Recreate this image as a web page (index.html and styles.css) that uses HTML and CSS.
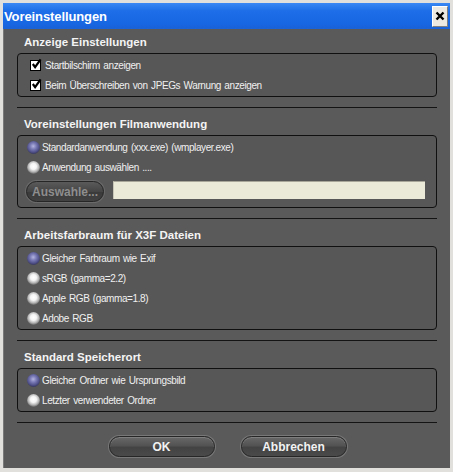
FILE: index.html
```html
<!DOCTYPE html>
<html lang="de">
<head>
    <meta charset="UTF-8">
    <title>Voreinstellungen</title>
    <link rel="stylesheet" href="styles.css">
</head>
<body>

<div class="window">
    <div class="titlebar">
        <span class="title">Voreinstellungen</span>
        <button class="close-btn" type="button">
            <svg width="10" height="10" viewBox="0 0 10 10"><path d="M1.5 1.5 L8.5 8.5 M8.5 1.5 L1.5 8.5" stroke="#000" stroke-width="2.4"/></svg>
        </button>
    </div>

    <div class="dialog">
        <div class="section first">
            <h2 class="section-title">Anzeige Einstellungen</h2>
            <div class="group">
                <label class="option check-row">
                    <span class="checkbox"><svg width="12" height="12" viewBox="0 0 12 12"><path d="M2 6 L4.5 9.5 L10.5 1" fill="none" stroke="#000" stroke-width="2.4"/></svg></span>
                    Startbilschirm anzeigen
                </label>
                <label class="option check-row">
                    <span class="checkbox"><svg width="12" height="12" viewBox="0 0 12 12"><path d="M2 6 L4.5 9.5 L10.5 1" fill="none" stroke="#000" stroke-width="2.4"/></svg></span>
                    Beim Überschreiben von JPEGs Warnung anzeigen
                </label>
            </div>
        </div>

        <div class="section">
            <h2 class="section-title">Voreinstellungen Filmanwendung</h2>
            <div class="group film-group">
                <label class="option"><span class="radio selected"></span>Standardanwendung (xxx.exe) (wmplayer.exe)</label>
                <label class="option"><span class="radio"></span>Anwendung auswählen ....</label>
                <div class="browse-row">
                    <button class="pill-btn browse-btn" type="button" disabled>Auswahle...</button>
                    <input class="path-input" type="text">
                </div>
            </div>
        </div>

        <div class="section">
            <h2 class="section-title">Arbeitsfarbraum für X3F Dateien</h2>
            <div class="group">
                <label class="option"><span class="radio selected"></span>Gleicher Farbraum wie Exif</label>
                <label class="option"><span class="radio"></span>sRGB (gamma=2.2)</label>
                <label class="option"><span class="radio"></span>Apple RGB (gamma=1.8)</label>
                <label class="option"><span class="radio"></span>Adobe RGB</label>
            </div>
        </div>

        <div class="section">
            <h2 class="section-title">Standard Speicherort</h2>
            <div class="group">
                <label class="option"><span class="radio selected"></span>Gleicher Ordner wie Ursprungsbild</label>
                <label class="option"><span class="radio"></span>Letzter verwendeter Ordner</label>
            </div>
        </div>

        <div class="actions">
            <button class="pill-btn action-btn" type="button">OK</button>
            <button class="pill-btn action-btn" type="button">Abbrechen</button>
        </div>
    </div>
</div>

</body>
</html>
```

FILE: styles.css
```css
* {
    box-sizing: border-box;
}

body {
    margin: 0;
    background-color: #d6d3ce;
    font-family: "Liberation Sans", Arial, sans-serif;
}

.window {
    width: 453px;
    height: 472px;
    display: flex;
    flex-direction: column;
    border-style: solid;
    border-color: #e2e0dc;
    border-width: 3px 3px 4px 3px;
    background-color: #5a5a5a;
}

.titlebar {
    height: 26px;
    display: flex;
    align-items: center;
    justify-content: space-between;
    padding: 0 2px 0 1px;
    background: linear-gradient(#3a88f4, #1d6ee8 30%, #1766e2 80%, #1a62d6);
}

.title {
    color: #fff;
    font-weight: bold;
    font-size: 13px;
    letter-spacing: -0.1px;
}

.close-btn {
    width: 16px;
    height: 21px;
    padding: 0;
    display: flex;
    align-items: center;
    justify-content: center;
    border: 1px solid #fff;
    border-right-color: #808080;
    border-bottom-color: #808080;
    background-color: #ece9e2;
}

.dialog {
    flex: 1;
    display: flex;
    flex-direction: column;
    padding: 0 13px 0 13px;
    border-left: 1px solid #7a7a7a;
}

.section {
    padding: 9px 0 10px;
    border-bottom: 1px solid #141414;
}

.section.first {
    padding-top: 6px;
}

.section-title {
    margin: 0 0 4px 7px;
    font-size: 11.5px;
    line-height: 14px;
    font-weight: bold;
    color: #f4f4f4;
}

.group {
    border: 1px solid #101010;
    border-radius: 4px;
    background-color: #575757;
    padding: 1px 0 1px;
}

.option {
    height: 20px;
    display: flex;
    align-items: center;
    padding-left: 9px;
    font-size: 10px;
    letter-spacing: -0.4px;
    word-spacing: 1px;
    color: #f0f0f0;
}

.check-row {
    padding-left: 12px;
}

.checkbox {
    width: 11px;
    height: 11px;
    margin-right: 4px;
    background-color: #fff;
    border: 1px solid #000;
    display: flex;
    align-items: center;
    justify-content: center;
}

.checkbox svg {
    margin: -2px -2px 0 0;
}

.radio {
    width: 13px;
    height: 13px;
    margin-right: 2px;
    border-radius: 50%;
    background: radial-gradient(circle at 50% 42%, #fff 0, #f4f4f4 30%, #b4b4b4 55%, #505050 80%, #2a2a2a 100%);
}

.radio.selected {
    background: radial-gradient(circle at 48% 40%, #b4b4e0 0, #7a7ab6 30%, #50508a 58%, #2e2e4a 82%, #1e1e1e 100%);
}

.film-group {
    padding-bottom: 5px;
}

.browse-row {
    display: flex;
    align-items: flex-start;
    margin-top: 4px;
    padding: 0 11px 0 8px;
}

.pill-btn {
    height: 21px;
    border: 1px solid #262626;
    border-radius: 11px;
    box-shadow: 0 0 0 1px #787878, inset 0 1px 0 #7e7e7e;
    background: linear-gradient(#686868, #535353 45%, #434343 55%, #4a4a4a);
    font-family: "Liberation Sans", Arial, sans-serif;
    font-weight: bold;
    font-size: 12px;
    color: #f2f2f2;
    padding: 0;
}

.browse-btn {
    width: 78px;
    color: #8e8e8e;
    background: linear-gradient(#5a5a5a, #454545 50%, #3a3a3a 55%, #424242);
    box-shadow: 0 0 0 1px #6a6a6a;
}

.path-input {
    flex: 1;
    height: 18px;
    margin-left: 9px;
    border: none;
    border-top: 1px solid #a8a698;
    border-left: 1px solid #c8c6b6;
    background-color: #ebe9d7;
}

.actions {
    display: flex;
    justify-content: center;
    gap: 26px;
    padding: 13px 0 0 1px;
}

.action-btn {
    width: 106px;
}
```
